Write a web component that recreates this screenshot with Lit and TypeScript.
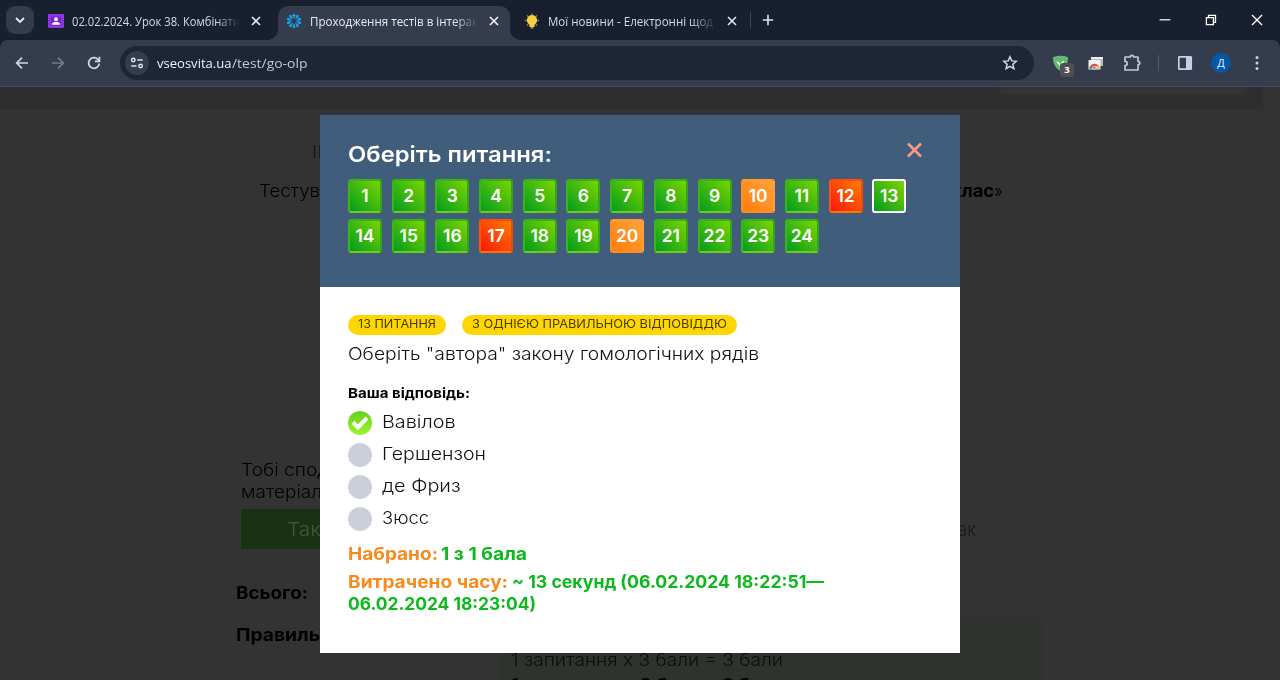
import { LitElement, html, css, svg } from "lit";
import { customElement, property } from "lit/decorators.js";
import { classMap } from "lit/directives/class-map.js";

// A single line of text stretched horizontally to a given width.
@customElement("fit-text")
class FitText extends LitElement {
  @property({ type: Number }) w = 0;
  static styles = css`
    :host { display: block; white-space: nowrap; flex: none; }
    .line { display: inline-block; transform-origin: 0 50%; }
  `;
  render() {
    return html`<span class="line"><slot></slot></span>`;
  }
  async firstUpdated() {
    await document.fonts.ready;
    const line = this.renderRoot.querySelector(".line") as HTMLElement;
    const natural = line.getBoundingClientRect().width;
    if (natural && this.w) {
      this.style.width = `${this.w}px`;
      line.style.transform = `scaleX(${this.w / natural})`;
    }
  }
}

@customElement("browser-chrome")
class BrowserChrome extends LitElement {
  static styles = css`
    :host { display: block; font-family: "Open Sans", "Noto Sans", sans-serif; color: #d3dae8; }
    svg { display: block; flex: none; fill: none; }
    .strip { display: flex; height: 40px; background: #18202f; align-items: center; box-sizing: border-box; padding-left: 6px; }
    .search { width: 28px; height: 28px; border-radius: 9px; background: #333b4c; display: grid; place-items: center; }
    .tab { display: flex; align-items: center; height: 34px; margin-top: 6px; box-sizing: border-box; padding-bottom: 5px; position: relative; }
    .tab.first { width: 230px; margin-left: 14px; }
    .tab.active { width: 232px; background: #343c4d; border-radius: 10px 10px 0 0; }
    .tab.third { width: 240px; }
    .tab.active::before, .tab.active::after { content: ""; position: absolute; bottom: 0; width: 10px; height: 10px; }
    .tab.active::before { left: -10px; background: radial-gradient(circle at 0 0, transparent 9.5px, #343c4d 10px); }
    .tab.active::after { right: -10px; background: radial-gradient(circle at 100% 0, transparent 9.5px, #343c4d 10px); }
    .ico { width: 16px; height: 16px; margin-right: 8px; }
    .active .ico { margin-left: 8px; }
    .third .ico { margin-left: 14px; }
    .title { width: 168px; overflow: hidden; font-size: 12px; line-height: 18px; padding-top: 2px;
      -webkit-mask-image: linear-gradient(90deg, #000 144px, transparent 168px); mask-image: linear-gradient(90deg, #000 144px, transparent 168px); }
    .active .title { color: #e6eaf3; }
    .x { margin-left: 10px; }
    .bar { width: 1px; height: 16px; background: #3d4557; }
    .plus { margin-left: 11px; }
    .win { display: flex; gap: 34px; margin-left: auto; padding-right: 17px; align-items: center; }
    .toolbar { display: flex; align-items: center; height: 47px; box-sizing: border-box; background: #343c4d; border-bottom: 1px solid #444b5b; border-radius: 8px 8px 0 0; padding-left: 14px; }
    .top { background: #18202f; }
    .nav { display: flex; gap: 20px; margin-right: 18px; }
    .omni { display: flex; align-items: center; width: 914px; height: 34px; box-sizing: border-box; border-radius: 17px; background: #1e2636; padding: 0 16px 0 5px; }
    .site { width: 24px; height: 24px; border-radius: 50%; background: #343c4d; display: grid; place-items: center; margin-right: 8px; }
    .url { font-size: 13.5px; line-height: 20px; color: #c1c8d7; display: flex; flex: 1; }
    .host { color: #eef1f8; }
    .ext { display: flex; align-items: center; }
    .shield { position: relative; margin-left: 18px; }
    .count { position: absolute; left: 8px; top: 8px; width: 14px; height: 14px; border-radius: 3px; background: #504f4f; color: #fff; font: bold 9.5px/14px "Open Sans", sans-serif; text-align: center; }
    .store { margin-left: 18px; }
    .puzzle { margin-left: 18px; }
    .sep { width: 1px; height: 16px; background: #525a6c; margin: 0 18px 0 16px; }
    .me { width: 20px; height: 20px; border-radius: 50%; background: #0857a4; color: #dcecff; font-size: 11px; line-height: 19px; text-align: center; margin: 0 24px 0 18px; }
  `;
  closeIcon(color = "#e1e6f0") {
    return html`<svg class="x" width="12" height="12" viewBox="0 0 12 12" stroke=${color} stroke-width="1.6"><path d="M2 2l8 8M10 2l-8 8"/></svg>`;
  }
  render() {
    const rays = [0, 36, 72, 108, 144, 180, 216, 252, 288, 324];
    const sun = [0, 45, 90, 135, 180, 225, 270, 315];
    return html`
      <div class="top">
        <div class="strip">
          <div class="search"><svg width="12" height="12" viewBox="0 0 12 12" stroke="#e8ecf5" stroke-width="1.8"><path d="M2 4l4 4 4-4"/></svg></div>
          <div class="tab first">
            <svg class="ico" viewBox="0 0 16 16"><rect y="1" width="16" height="14" rx="1" fill="#8c38df"/><rect x="3" y="3.5" width="10" height="9" fill="#7a22cf"/><circle cx="8" cy="6.2" r="1.9" fill="#fff"/><path d="M4 11.7c0-2.2 2-3 4-3s4 .8 4 3z" fill="#fff"/></svg>
            <div class="title"><fit-text w="168">02.02.2024. Урок 38. Комбінати</fit-text></div>
            ${this.closeIcon()}
          </div>
          <div class="tab active">
            <svg class="ico" viewBox="0 0 16 16">${rays.map((a) => svg`<path d="M8 6L6.5 2.2Q8-1.4 9.5 2.2z" fill="#1aa0e8" transform="rotate(${a} 8 8)"/>`)}</svg>
            <div class="title"><fit-text w="168">Проходження тестів в інтерак</fit-text></div>
            ${this.closeIcon("#f5f7fb")}
          </div>
          <div class="tab third">
            <svg class="ico" viewBox="0 0 16 16"><g stroke="#9b8a35" stroke-width="1.3">${sun.map((a) => svg`<path d="M8 .3v2" transform="rotate(${a} 8 7.5)"/>`)}</g><path d="M8 2a5.2 5.2 0 0 0-2.6 9.6V14h5.2v-2.4A5.2 5.2 0 0 0 8 2z" fill="#f6d043"/><path d="M6.5 15h3" stroke="#b6b6a0"/></svg>
            <div class="title"><fit-text w="165">Мої новини - Електронні щод</fit-text></div>
            ${this.closeIcon()}
          </div>
          <div class="bar"></div>
          <svg class="plus" width="12" height="12" viewBox="0 0 12 12" stroke="#d6ddeb" stroke-width="1.7"><path d="M6 .8v10.4M.8 6h10.4"/></svg>
          <div class="win">
            <svg width="12" height="12" viewBox="0 0 12 12" stroke="#fff" stroke-width="1.2"><path d="M.6 5.8h10.8"/></svg>
            <svg width="12" height="12" viewBox="0 0 12 12" stroke="#fff" stroke-width="1.3"><path d="M1.4 3.6h7v7h-7zM3.5 3.3V1.3h7v7H8.6"/></svg>
            <svg width="12" height="12" viewBox="0 0 12 12" stroke="#fff" stroke-width="1.4"><path d="M1 1l10 10M11 1L1 11"/></svg>
          </div>
        </div>
        <div class="toolbar">
          <div class="nav">
            <svg width="16" height="16" viewBox="0 0 16 16" stroke="#cfd7ea" stroke-width="1.7"><path d="M14 8H3M8 2.7L2.7 8 8 13.3"/></svg>
            <svg width="16" height="16" viewBox="0 0 16 16" stroke="#747d90" stroke-width="1.7"><path d="M2 8h11M8 2.7L13.3 8 8 13.3"/></svg>
            <svg width="16" height="16" viewBox="0 0 16 16" stroke="#cfd7ea" stroke-width="1.8"><path d="M13.2 8.6A5.3 5.3 0 1 1 11.9 4.5L13.3 6M13.4 1.8V6.3H8.9"/></svg>
          </div>
          <div class="omni">
            <div class="site"><svg width="14" height="14" viewBox="0 0 14 14" stroke="#dde3f0" stroke-width="1.5"><circle cx="3.3" cy="4" r="1.7"/><path d="M7.3 4h5.4M1.2 10h5.4"/><circle cx="10.6" cy="10" r="1.7"/></svg></div>
            <div class="url"><fit-text class="host" w="74.5">vseosvita.ua</fit-text><fit-text w="75.5">/test/go-olp</fit-text></div>
            <svg width="16" height="16" viewBox="0 0 16 16" stroke="#cfd7ea" stroke-width="1.5"><path d="M8 1.8l1.8 4.1 4.5.4-3.4 3 1 4.4L8 11.4l-3.9 2.3 1-4.4-3.400-3 4.500-.4z"/></svg>
          </div>
          <div class="ext">
            <div class="shield">
              <svg width="17" height="17" viewBox="0 0 18 18"><path d="M1 2.3Q9-.6 17 2.3C17 10 13.5 14.3 9 17 4.5 14.3 1 10 1 2.3z" fill="#62b970"/><path d="M5.3 7l3.2 3.5 4-4" stroke="#fff" stroke-width="1.5"/></svg>
              <div class="count">3</div>
            </div>
            <svg class="store" width="17" height="18" viewBox="0 0 17 18"><path d="M4 3h12v9H4z" fill="#b9bbc1"/><path d="M4 3h12v2H4z" fill="#eceef2"/><path d="M1.500 6h12v9.500h-12z" fill="#f2f2f3"/><path d="M2.500 14.800a5 5 0 0 1 10 0H7.500z" fill="#e54d40"/><path d="M2.500 14.800a5 5 0 0 1 .9-2.900l3.100 2.900z" fill="#32a852"/><path d="M12.500 14.800a5 5 0 0 0-.8-2.700H8v2.700z" fill="#f9c534"/><path d="M5.200 14.800a2.300 2.300 0 0 1 4.600 0z" fill="#4387f4" stroke="#fff" stroke-width=".6"/></svg>
            <svg class="puzzle" width="20" height="20" viewBox="0 0 20 20" stroke="#c1c9df" stroke-width="1.7" stroke-linejoin="round"><path d="M3 4h5.200a1.700 1.700 0 0 1 3.400 0H16v4.300a1.800 1.800 0 0 1 0 3.600V17H3v-4.300a2.200 2.200 0 0 0 0-4.400z"/></svg>
            <div class="sep"></div>
            <svg width="16" height="16" viewBox="0 0 16 16"><rect x="1.8" y="1.8" width="12.4" height="12.4" rx=".5" stroke="#c6cfe6" stroke-width="1.7"/><path d="M9 2h5v12H9z" fill="#c6cfe6"/></svg>
            <div class="me">Д</div>
            <svg width="4" height="16" viewBox="0 0 4 16"><g fill="#cdd4e4"><circle cx="2" cy="2.6" r="1.5"/><circle cx="2" cy="8" r="1.5"/><circle cx="2" cy="13.4" r="1.5"/></g></svg>
          </div>
        </div>
      </div>`;
  }
}

@customElement("results-page")
class ResultsPage extends LitElement {
  static styles = css`
    :host { display: block; font-size: 17.4px; font-weight: 300; line-height: 22px; color: #000; }
    .band { width: 1263px; height: 22px; background: #2c2e30; display: flex; }
    .pill { margin-left: 998px; width: 250px; height: 8px; border-radius: 0 0 10px 10px; background: #343331; }
    .head { padding: 32px 0 0 312px; color: #171717; }
    .sub { display: flex; width: 744px; margin: 17px 0 0 259px; }
    .end { display: flex; margin-left: auto; }
    b { font-weight: 700; color: #000; }
    .like { margin: 257px 0 0 241px; }
    .vote { display: flex; justify-content: space-between; width: 781px; margin: 6px 0 0 241px; line-height: 40px; font-size: 18.5px; }
    .yes { width: 380px; height: 40px; background: #1a3214; color: #46543e; box-sizing: border-box; padding-left: 46px; }
    .no { width: 380px; height: 40px; box-sizing: border-box; border: 1px solid #2e3031; color: #15191d; display: flex; justify-content: flex-end; padding-right: 45px; line-height: 38px; }
    .total { margin: 33px 0 0 236px; }
    .right { display: flex; margin: 14px 0 0 236px; }
    .right > b { padding-top: 6px; width: 263px; }
    .box { width: 519px; height: 80px; padding: 31px 12px 0; background: #2e332d; color: #0c0e0c; }
    .box b { display: block; margin-top: 3px; }
  `;
  render() {
    return html`
      <div class="band"><div class="pill"></div></div>
      <div class="head"><fit-text w="29">ІМ'</fit-text></div>
      <div class="sub"><fit-text w="61">Тестув</fit-text><div class="end"><b><fit-text w="43">клас</fit-text></b><fit-text w="9">»</fit-text></div></div>
      <div class="like"><fit-text w="88">Тобі спод</fit-text><fit-text w="81">матеріал</fit-text></div>
      <div class="vote"><div class="yes"><fit-text w="34">Так</fit-text></div><div class="no"><fit-text w="53">Не так</fit-text></div></div>
      <div class="total"><b><fit-text w="72">Всього:</fit-text></b></div>
      <div class="right"><b><fit-text w="84">Правиль</fit-text></b>
        <div class="box"><fit-text w="272">1 запитання х 3 бали = 3 бали</fit-text><b><fit-text w="272">1 запитання х 3 бали = 3 бали</fit-text></b></div>
      </div>`;
  }
}

@customElement("question-dialog")
class QuestionDialog extends LitElement {
  static styles = css`
    :host { display: block; width: 640px; height: 538px; background: #fff; color: #111; }
    .head { height: 172px; box-sizing: border-box; padding: 25px 38.5px 0 28px; background: #405e7b; color: #fff; }
    .row { display: flex; justify-content: space-between; font-size: 21.5px; font-weight: 600; line-height: 28px; }
    .row svg { margin-top: 2px; }
    .tiles { display: grid; grid-template-columns: repeat(13, 34px); gap: 6px 9.7px; margin-top: 11px; }
    .tile { height: 34px; box-sizing: border-box; border: 2px solid; border-radius: 3px; font-size: 17.5px; font-weight: 600; display: grid; place-items: center; line-height: 30px;
      background: linear-gradient(45deg, #039c1e, #7bd500) padding-box; border-color: #35b31b #32a51b #6dcc1c #39b719; }
    .half { background: linear-gradient(45deg, #ff7d0c, #ffa33c); border-color: #ff9a2e #ff9e38 #ff8c24 #ff8e24; }
    .bad { background: linear-gradient(45deg, #fb1705, #ff7d00) padding-box; border-color: #ff4a11 #f24706 #ff7306 #ff5510; }
    .current { border-color: #fff; }
    .body { padding: 28px; font-size: 17.4px; font-weight: 300; line-height: 22px; }
    .badges { display: flex; gap: 16px; font-size: 11.7px; font-weight: 400; line-height: 18px; color: #4b3b00; }
    .badge { height: 20px; border-radius: 10px; padding: 0 10px; background: #fed602; }
    .q { margin-top: 8px; }
    .label { margin: 19px 0 4px; font-size: 13.5px; font-weight: 700; line-height: 18px; color: #000; }
    .opt { display: flex; align-items: center; gap: 10px; height: 32px; }
    .dot { width: 24px; height: 24px; margin-top: 1px; border-radius: 50%; background: #cacfd8; display: grid; place-items: center; }
    .dot.on { background: linear-gradient(#68cf1b, #9cf52c); }
    .opt svg { display: block; }
    .score { font-weight: 700; color: #0fb81d; }
    .score em { font-style: normal; color: #f68b1f; }
    .pts { display: flex; gap: 3px; margin: 9px 0 6px; }
    .time { display: flex; gap: 4px; }
  `;
  render() {
    const nums = Array.from({ length: 24 }, (_, i) => i + 1);
    const options: [string, number][] = [["Вавілов", 73.5], ["Гершензон", 104], ["де Фриз", 78.5], ["Зюсс", 47]];
    return html`
      <div class="head">
        <div class="row"><fit-text w="204">Оберіть питання:</fit-text>
          <svg width="15" height="16" viewBox="0 0 15 16" fill="none" stroke="#fb9884" stroke-width="2.6"><path d="M1 1.5l13 13M14 1.5l-13 13"/></svg></div>
        <div class="tiles">${nums.map((n) => html`<div class=${classMap({ tile: true, half: n === 10 || n === 20, bad: n === 12 || n === 17, current: n === 13 })}>${n}</div>`)}</div>
      </div>
      <div class="body">
        <div class="badges"><div class="badge"><fit-text w="78">13 ПИТАННЯ</fit-text></div><div class="badge"><fit-text w="255">З ОДНІЄЮ ПРАВИЛЬНОЮ ВІДПОВІДДЮ</fit-text></div></div>
        <div class="q"><fit-text w="411">Оберіть "автора" закону гомологічних рядів</fit-text></div>
        <div class="label"><fit-text w="122">Ваша відповідь:</fit-text></div>
        ${options.map(([t, w], i) => html`<div class="opt"><div class=${classMap({ dot: true, on: i === 0 })}>${i === 0 ? html`<svg width="18" height="16" viewBox="0 0 18 16" fill="none" stroke="#fff" stroke-width="4"><path d="M2 7.5l5 5L16 3"/></svg>` : ""}</div><fit-text w=${w}>${t}</fit-text></div>`)}
        <div class="score">
          <div class="pts"><em><fit-text w="90">Набрано:</fit-text></em><fit-text w="86">1 з 1 бала</fit-text></div>
          <div class="time"><em><fit-text w="160">Витрачено часу:</fit-text></em><fit-text w="312">~ 13 секунд (06.02.2024 18:22:51—</fit-text></div>
          <fit-text w="188">06.02.2024 18:23:04)</fit-text>
        </div>
      </div>`;
  }
}

@customElement("app-root")
class AppRoot extends LitElement {
  static styles = css`
    :host { display: block; width: 1280px; height: 680px; overflow: hidden; background: #333; font-family: Inter, "Open Sans", sans-serif; }
    .page { position: relative; height: 593px; overflow: hidden; }
    .modal { position: absolute; left: 320px; top: 28px; }
  `;
  render() {
    return html`<browser-chrome></browser-chrome>
      <div class="page"><results-page></results-page><question-dialog class="modal"></question-dialog></div>`;
  }
}
